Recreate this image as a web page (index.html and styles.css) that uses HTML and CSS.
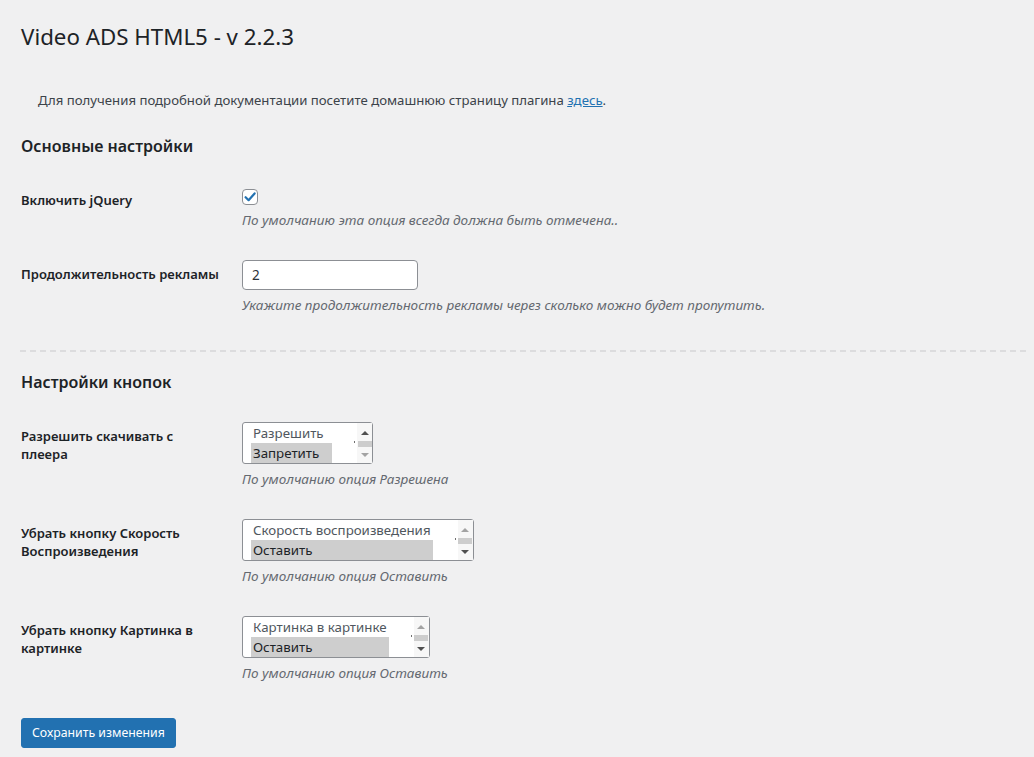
FILE: index.html
```html
<!DOCTYPE html>
<html lang="ru">
<head>
    <meta charset="UTF-8">
    <meta name="viewport" content="width=device-width, initial-scale=1.0">
    <title>Video ADS HTML5</title>
    <link rel="stylesheet" href="styles.css">
</head>
<body>
    <div class="wrap">
        <h1>Video ADS HTML5 - v 2.2.3</h1>

        <p class="intro">Для получения подробной документации посетите домашнюю страницу плагина <a href="#">здесь</a>.</p>

        <form>
            <h2>Основные настройки</h2>
            <table class="form-table">
                <tr>
                    <th>Включить jQuery</th>
                    <td>
                        <span class="checkbox">
                            <svg viewBox="0 0 16 16" width="16" height="16"><path d="M3.6 8.2 6.6 11.2 12.6 4.4" fill="none" stroke="#2271b1" stroke-width="2.2" stroke-linecap="round" stroke-linejoin="round"/></svg>
                        </span>
                        <p class="description">По умолчанию эта опция всегда должна быть отмечена..</p>
                    </td>
                </tr>
                <tr>
                    <th>Продолжительность рекламы</th>
                    <td>
                        <input type="text" class="text-input" value="2">
                        <p class="description">Укажите продолжительность рекламы через сколько можно будет пропутить.</p>
                    </td>
                </tr>
            </table>

            <hr class="divider">

            <h2>Настройки кнопок</h2>
            <table class="form-table">
                <tr>
                    <th>Разрешить скачивать с плеера</th>
                    <td>
                        <div class="listbox">
                            <div class="options">
                                <div class="option">Разрешить</div>
                                <div class="option selected">Запретить</div>
                            </div>
                            <div class="scrollbar">
                                <span class="arrow up"></span>
                                <span class="thumb"></span>
                                <span class="arrow down off"></span>
                            </div>
                        </div>
                        <p class="description">По умолчанию опция Разрешена</p>
                    </td>
                </tr>
                <tr>
                    <th>Убрать кнопку Скорость Воспроизведения</th>
                    <td>
                        <div class="listbox">
                            <div class="options">
                                <div class="option">Скорость воспроизведения</div>
                                <div class="option selected">Оставить</div>
                            </div>
                            <div class="scrollbar">
                                <span class="arrow up off"></span>
                                <span class="thumb"></span>
                                <span class="arrow down"></span>
                            </div>
                        </div>
                        <p class="description">По умолчанию опция Оставить</p>
                    </td>
                </tr>
                <tr>
                    <th>Убрать кнопку Картинка в картинке</th>
                    <td>
                        <div class="listbox">
                            <div class="options">
                                <div class="option">Картинка в картинке</div>
                                <div class="option selected">Оставить</div>
                            </div>
                            <div class="scrollbar">
                                <span class="arrow up off"></span>
                                <span class="thumb"></span>
                                <span class="arrow down"></span>
                            </div>
                        </div>
                        <p class="description">По умолчанию опция Оставить</p>
                    </td>
                </tr>
            </table>

            <p class="submit"><button type="button" class="button-primary">Сохранить изменения</button></p>
        </form>
    </div>
</body>
</html>
```

FILE: styles.css
```css
html, body {
    margin: 0;
    padding: 0;
    background: #f0f0f1;
    color: #3c434a;
    font-family: "Noto Sans", "Open Sans", sans-serif;
    font-size: 13px;
    line-height: 1.4;
}

.wrap {
    padding: 0 4px 0 21px;
}

h1 {
    margin: 0;
    padding: 22px 0 0;
    font-size: 22.3px;
    font-weight: 400;
    line-height: 29px;
    color: #1d2327;
}

.intro {
    margin: 40px 0 0 17px;
    font-size: 13.2px;
    line-height: 18px;
}

.intro a {
    color: #2271b1;
}

/* section titles */
h2 {
    margin: 26px 0 0;
    font-size: 16px;
    font-weight: 600;
    line-height: 22px;
    color: #1d2327;
}

.divider + h2 {
    margin-top: 19px;
}

.form-table {
    border-collapse: collapse;
    margin-top: 14px;
}

.form-table th {
    width: 200px;
    padding: 20px 11px 20px 0;
    vertical-align: top;
    text-align: left;
    font-size: 13px;
    font-weight: 600;
    line-height: 18px;
    color: #1d2327;
}

.form-table td {
    padding: 15px 10px;
    vertical-align: top;
}

.description {
    margin: 5px 0 0;
    font-size: 13.5px;
    font-style: italic;
    line-height: 20px;
    color: #646970;
}

.checkbox {
    display: block;
    width: 16px;
    height: 16px;
    box-sizing: border-box;
    margin-top: 3px;
    border: 1px solid #8c8f94;
    border-radius: 4px;
    background: #fff;
}

.checkbox svg {
    display: block;
    margin: -1px;
}

.text-input {
    display: block;
    width: 176px;
    height: 30px;
    box-sizing: border-box;
    margin: 0;
    padding: 0 9px;
    border: 1px solid #8c8f94;
    border-radius: 4px;
    background: #fff;
    font: inherit;
    font-size: 13.5px;
    color: #2c3338;
}

.divider {
    height: 2px;
    margin: 20px 0 0 -1px;
    border: 0;
    background: repeating-linear-gradient(to right, #dcdcde 0 6px, transparent 6px 10px);
}

/* multi-line select with its own scrollbar */
.listbox {
    display: inline-flex;
    height: 42px;
    box-sizing: border-box;
    padding-left: 8px;
    border: 1px solid #8c8f94;
    border-radius: 3px;
    background: #fff;
    font-size: 13.3px;
}

.options {
    min-width: 81px;
    margin-right: 25px;
}

.option {
    height: 20px;
    line-height: 20px;
    padding: 0 2px;
    color: #50575e;
}

.option.selected {
    background: #cecece;
    color: #1d2327;
}

.scrollbar {
    position: relative;
    width: 15px;
    display: flex;
    flex-direction: column;
    align-items: center;
    background: #f7f7f7;
}

.scrollbar::before {
    content: "";
    position: absolute;
    left: -3px;
    top: 18px;
    width: 1px;
    height: 2px;
    background: #6f6f6f;
}

.arrow {
    width: 0;
    height: 0;
    border-left: 4px solid transparent;
    border-right: 4px solid transparent;
}

.arrow.up {
    margin-top: 8px;
    border-bottom: 4px solid #505050;
}

.arrow.down {
    margin-top: 6px;
    border-top: 4px solid #505050;
}

.arrow.up.off {
    border-bottom-color: #a3a3a3;
}

.arrow.down.off {
    border-top-color: #a3a3a3;
}

.thumb {
    width: 14px;
    height: 6px;
    margin-top: 6px;
    background: #cdcdcd;
}

.submit {
    margin: 20px 0 0;
    padding-bottom: 10px;
}

.button-primary {
    height: 30px;
    padding: 0 10px;
    border: 1px solid #2271b1;
    border-radius: 3px;
    background: #2271b1;
    color: #fff;
    font: inherit;
    font-size: 12.3px;
    cursor: pointer;
}
```
